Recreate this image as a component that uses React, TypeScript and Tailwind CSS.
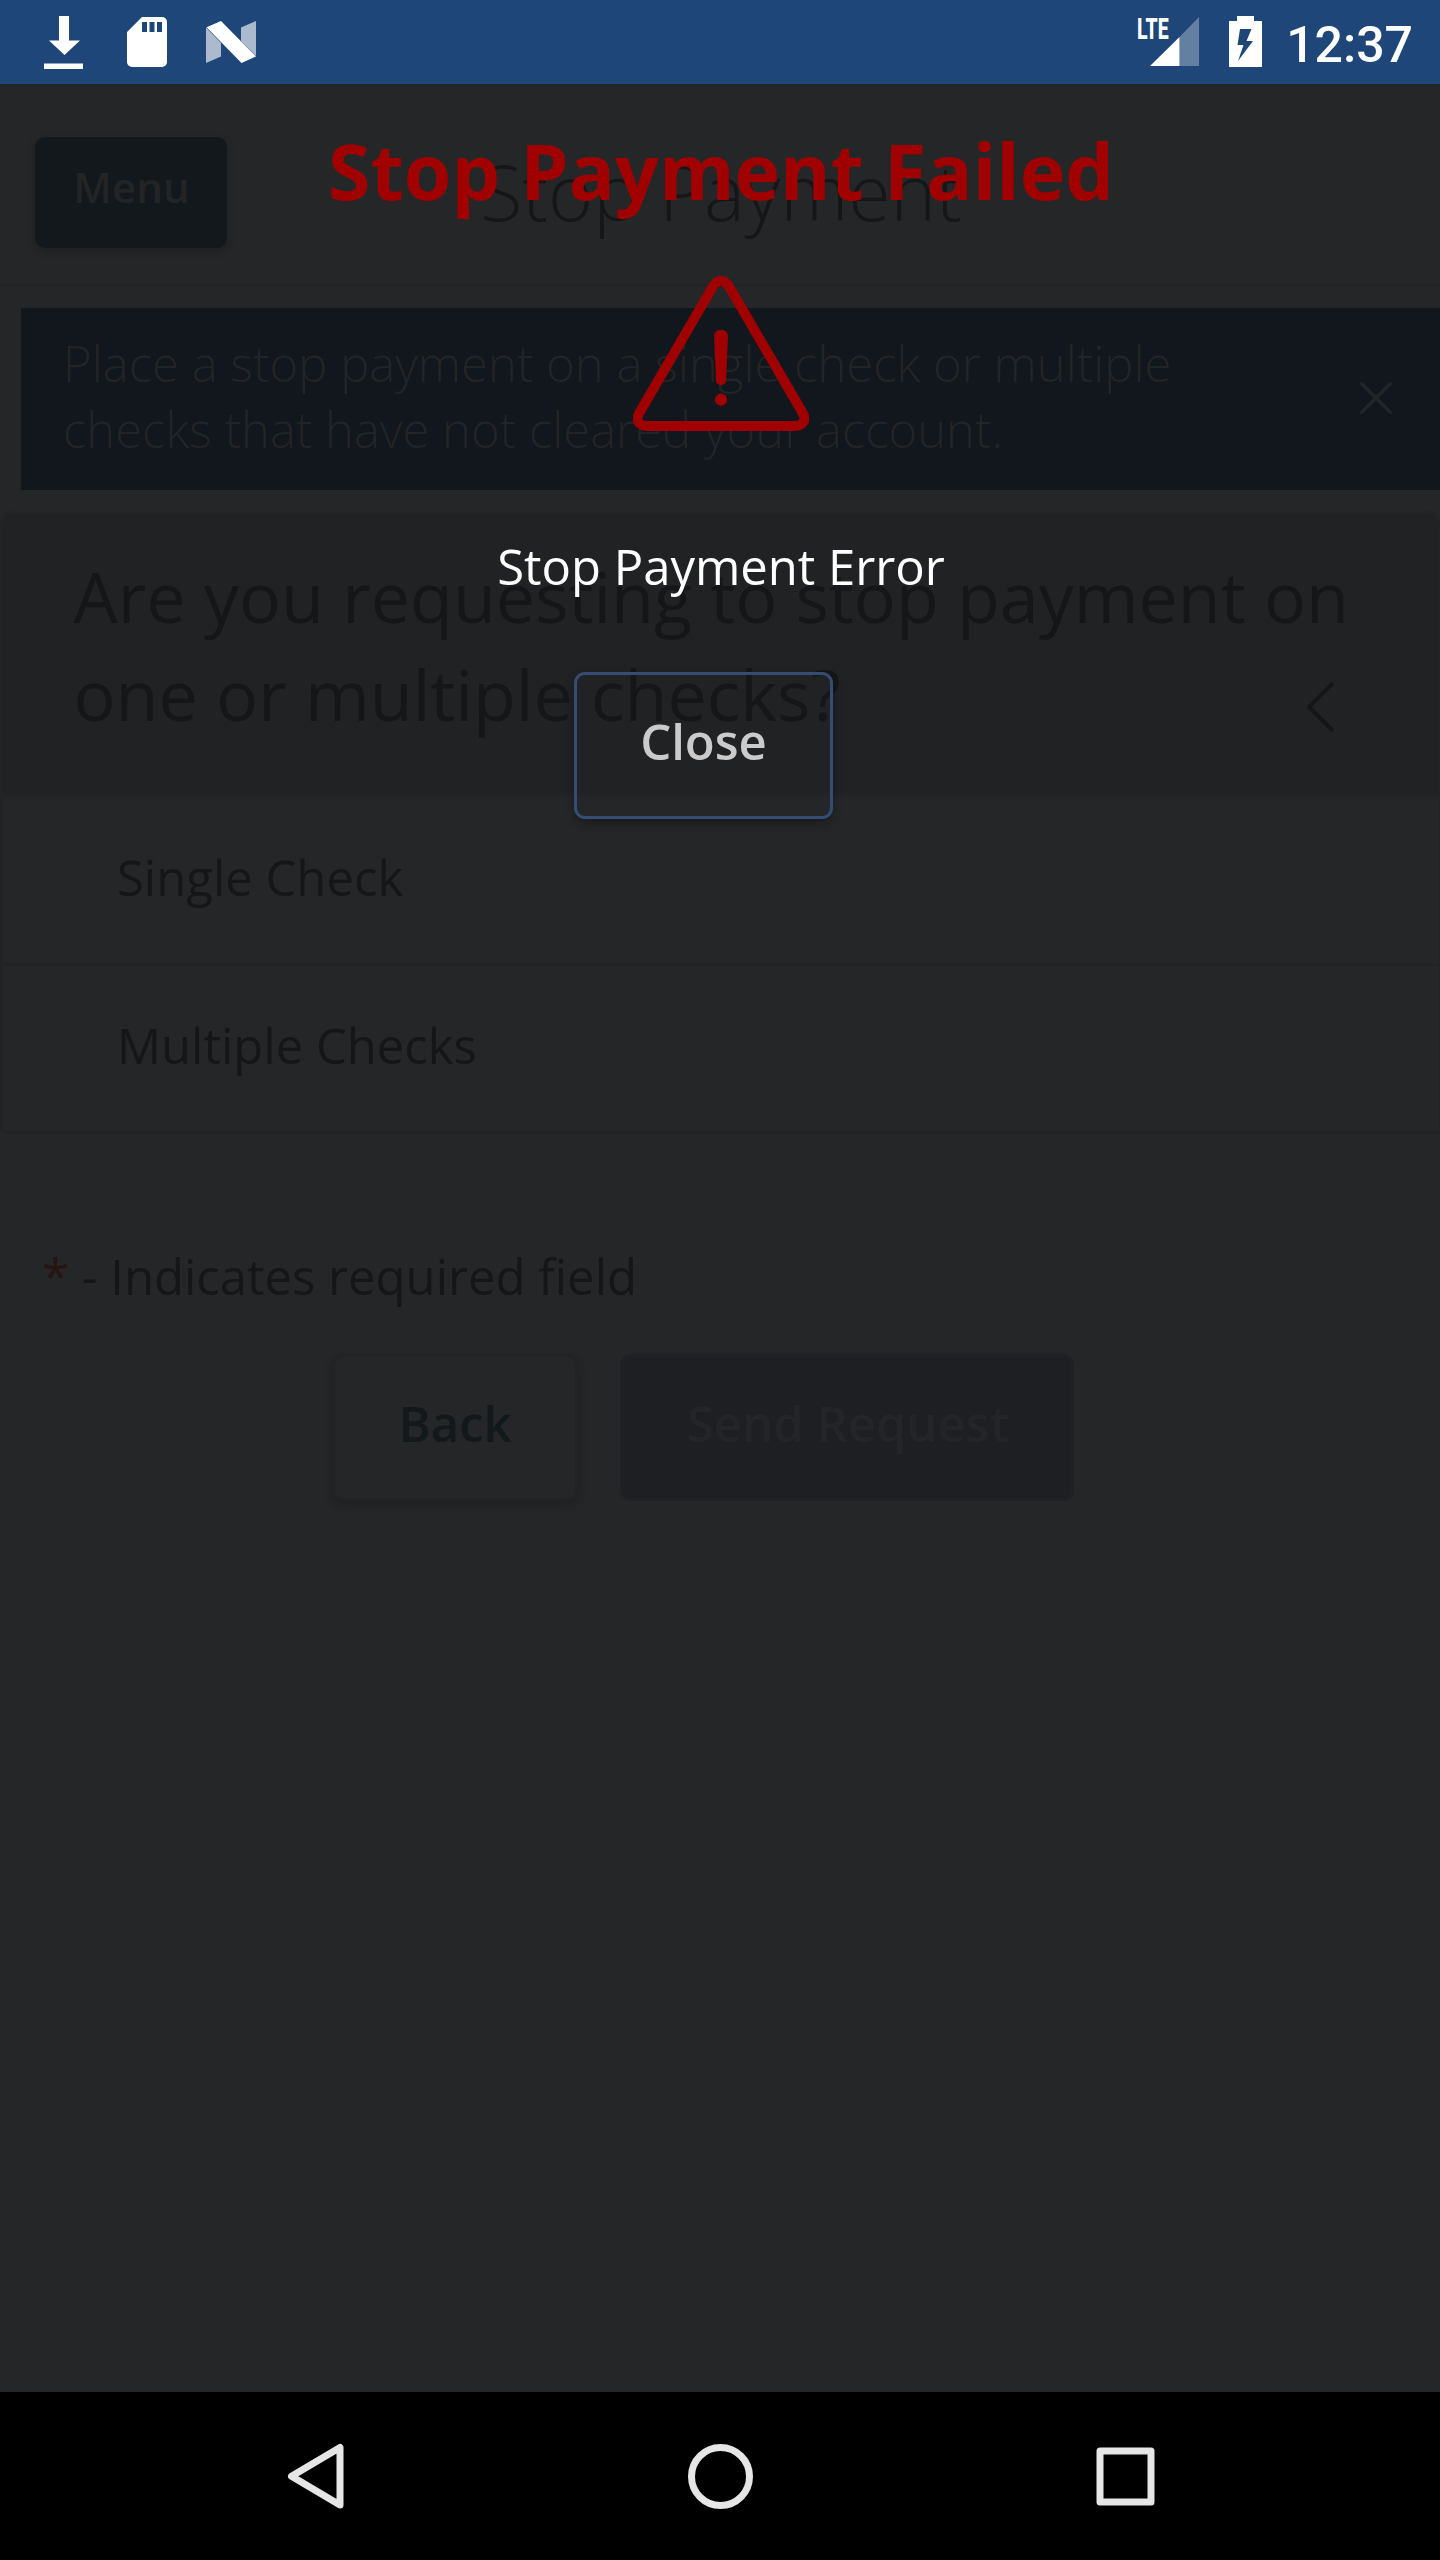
function StatusBar() {
  return (
    <div className="flex h-[84px] items-start bg-[#1e4678]">
      <svg className="block" width="280" height="84" viewBox="0 0 280 84" fill="#fff">
        <path d="M59 16h10v24.500h11L64.500 55 49 40.500h10z" />
        <rect x="44" y="63.500" width="39" height="5.500" />
        <path fillRule="evenodd" d="M142 17h20a5 5 0 0 1 5 5v40a5 5 0 0 1-5 5h-30a5 5 0 0 1-5-5V32zM142 22v10h5V22zM149.500 22v10h5V22zM157 22v10h5V22z" />
        <path opacity=".63" d="M206 27.500L221 43v13.500L206 63z M241 27.500L256 21v35L241 41z" />
        <path d="M206.500 27.300L221 21l35 35.500L241.500 63z" />
      </svg>
      <div className="mt-[14px] ml-auto w-[13px]">
        <span className="block w-max origin-left scale-x-[0.65] font-[Roboto] text-[30px] leading-[30px] font-extrabold text-white">LTE</span>
      </div>
      <svg className="block" width="136" height="84" viewBox="1150 0 136 84" fill="#fff">
        <path d="M1150 66L1179.500 37v29z" />
        <path opacity=".31" d="M1179.500 37L1199 17v49h-19.500z" />
        <path fillRule="evenodd" d="M1237 16h17v5h8v46h-33V21h8zM1240 29l-2.500 16h6L1238 61l15-20h-6.500l5-12z" />
      </svg>
      <span className="mt-[16px] mr-[27px] font-[Roboto] text-[50px] leading-[58px] font-medium text-white">12:37</span>
    </div>
  );
}

function PageHeader() {
  return (
    <header className="grid h-[203px] grid-cols-[1fr_auto_1fr] items-start border-b-[3px] border-[#222325]">
      <button className="mt-[53px] ml-[35px] flex h-[111px] w-[192px] items-start justify-center rounded-[10px] bg-[#13181c] pt-[21px] pl-px text-[42px] leading-[57px] font-semibold text-[#232426] shadow-[0_3px_10px_rgba(0,0,0,0.2)]">
        Menu
      </button>
      <h1 className="mt-[55px] ml-[2px] text-[77px] leading-[105px] font-light text-[#151618]">Stop Payment</h1>
      <div />
    </header>
  );
}

function Banner() {
  return (
    <div className="mt-[21px] ml-[21px] flex h-[182px] items-start bg-[#12171e] pl-[42px] text-[#232426]">
      <p className="mt-[22px] w-[1180px] text-[49px] leading-[66px] font-light">
        Place a stop payment on a single check or multiple
        <br />
        checks that have not cleared your account.
      </p>
      <svg className="mt-[73px] mr-[47px] ml-auto" width="34" height="34" viewBox="0 0 34 34" fill="none" stroke="currentColor" strokeWidth="3.500" strokeLinecap="round">
        <path d="M2.500 2.500L31.500 31.500M31.500 2.500L2.500 31.500" />
      </svg>
    </div>
  );
}

function QuestionCard() {
  return (
    <section className="mt-[21px] text-[#151618]">
      <div className="flex h-[286px] items-start rounded-t-[12px] border-[3px] border-r border-[#232426] bg-[#212224] pl-[70.5px]">
        <h2 className="mt-[33px] w-[1233px] text-[70px] leading-[98px] whitespace-nowrap">
          Are you requesting to stop payment on
          <br />
          one or multiple checks?
        </h2>
        <svg className="mt-[168px]" width="28" height="50" viewBox="0 0 28 50" fill="none" stroke="currentColor" strokeWidth="4.200" strokeLinecap="round" strokeLinejoin="round">
          <path d="M24.500 2.500L2 25L24.500 47.500" />
        </svg>
      </div>
      <ul className="rounded-bl-[6px] border-r border-b-[3px] border-l-[3px] border-[#222325] text-[49px] leading-[66px]">
        <li className="h-[169px] border-b-[3px] border-[#222325] pt-[47px] pl-[114px]">Single Check</li>
        <li className="h-[165px] pt-[46px] pl-[114px]">Multiple Checks</li>
      </ul>
    </section>
  );
}

function FormFooter() {
  return (
    <footer className="text-[49px] leading-[66px]">
      <p className="mt-[109px] pl-[42px] text-[#151618]">
        <span className="text-[#261514]">*</span> - Indicates required field
      </p>
      <div className="mt-[45px] ml-[332px] flex gap-[42px]">
        <button className="flex h-[147px] w-[246px] items-start justify-center rounded-[11px] border-[3px] border-[#222325] pt-[33px] font-semibold text-[#13181b] shadow-[0_4px_9px_rgba(0,0,0,0.18)]">
          Back
        </button>
        <button className="flex h-[147px] w-[454px] items-start justify-center rounded-[11px] border-[3px] border-[#202125] bg-[#1e1f23] pt-[33px] pl-[2px] font-semibold text-[#242528]">
          Send Request
        </button>
      </div>
    </footer>
  );
}

function ErrorDialog() {
  return (
    <div role="alertdialog" className="absolute inset-x-0 top-[84px] flex flex-col items-center pl-[2px]">
      <h2 className="mt-[34px] text-[77px] leading-[105px] font-bold text-[#a00000]">Stop Payment Failed</h2>
      <svg className="mt-[52px]" width="176" height="157" viewBox="633 275 176 157" fill="#a00000">
        <path fill="none" stroke="#a00000" strokeWidth="9.800" d="M713.500 285.500Q721 276 728.500 285.500L803 413.500C807 421 802 426 795 426H647C640 426 635 421 639 413.500Z" />
        <path d="M714 336a6 6 0 0 1 6-6h2a6 6 0 0 1 6 6l-2 44.300a5 5 0 0 1-10 0z" />
        <circle cx="721" cy="399.700" r="6.100" />
      </svg>
      <p className="mt-[101px] text-[49px] leading-[66px] text-white">Stop Payment Error</p>
      <button className="mt-[73px] mr-[35px] flex h-[147px] w-[259px] items-start justify-center rounded-[11px] border-[3px] border-[#344d70] pt-[33px] text-[49px] leading-[66px] font-semibold text-[#cbcbcb] shadow-[0_4px_10px_rgba(0,0,0,0.3)]">
        Close
      </button>
    </div>
  );
}

function NavigationBar() {
  return (
    <nav className="flex h-[168px] items-center justify-between bg-black px-[283px]">
      <svg width="66" height="66" viewBox="0 0 66 66" fill="none" stroke="#e6e6e6" strokeWidth="7" strokeLinejoin="round">
        <path d="M57 4.500V62L8.500 33.250Z" />
      </svg>
      <svg width="66" height="66" viewBox="0 0 66 66" fill="none" stroke="#e6e6e6" strokeWidth="7">
        <circle cx="33.500" cy="33.500" r="29" />
      </svg>
      <svg width="66" height="66" viewBox="0 0 66 66" fill="none" stroke="#e6e6e6" strokeWidth="7" strokeLinejoin="round">
        <rect x="9" y="8" width="51" height="51" />
      </svg>
    </nav>
  );
}

export default function App() {
  return (
    <div className="relative flex h-[2560px] w-[1440px] flex-col overflow-hidden bg-[#252628] font-['Open_Sans',sans-serif]">
      <StatusBar />
      <main className="flex-1">
        <PageHeader />
        <Banner />
        <QuestionCard />
        <FormFooter />
      </main>
      <ErrorDialog />
      <NavigationBar />
    </div>
  );
}
